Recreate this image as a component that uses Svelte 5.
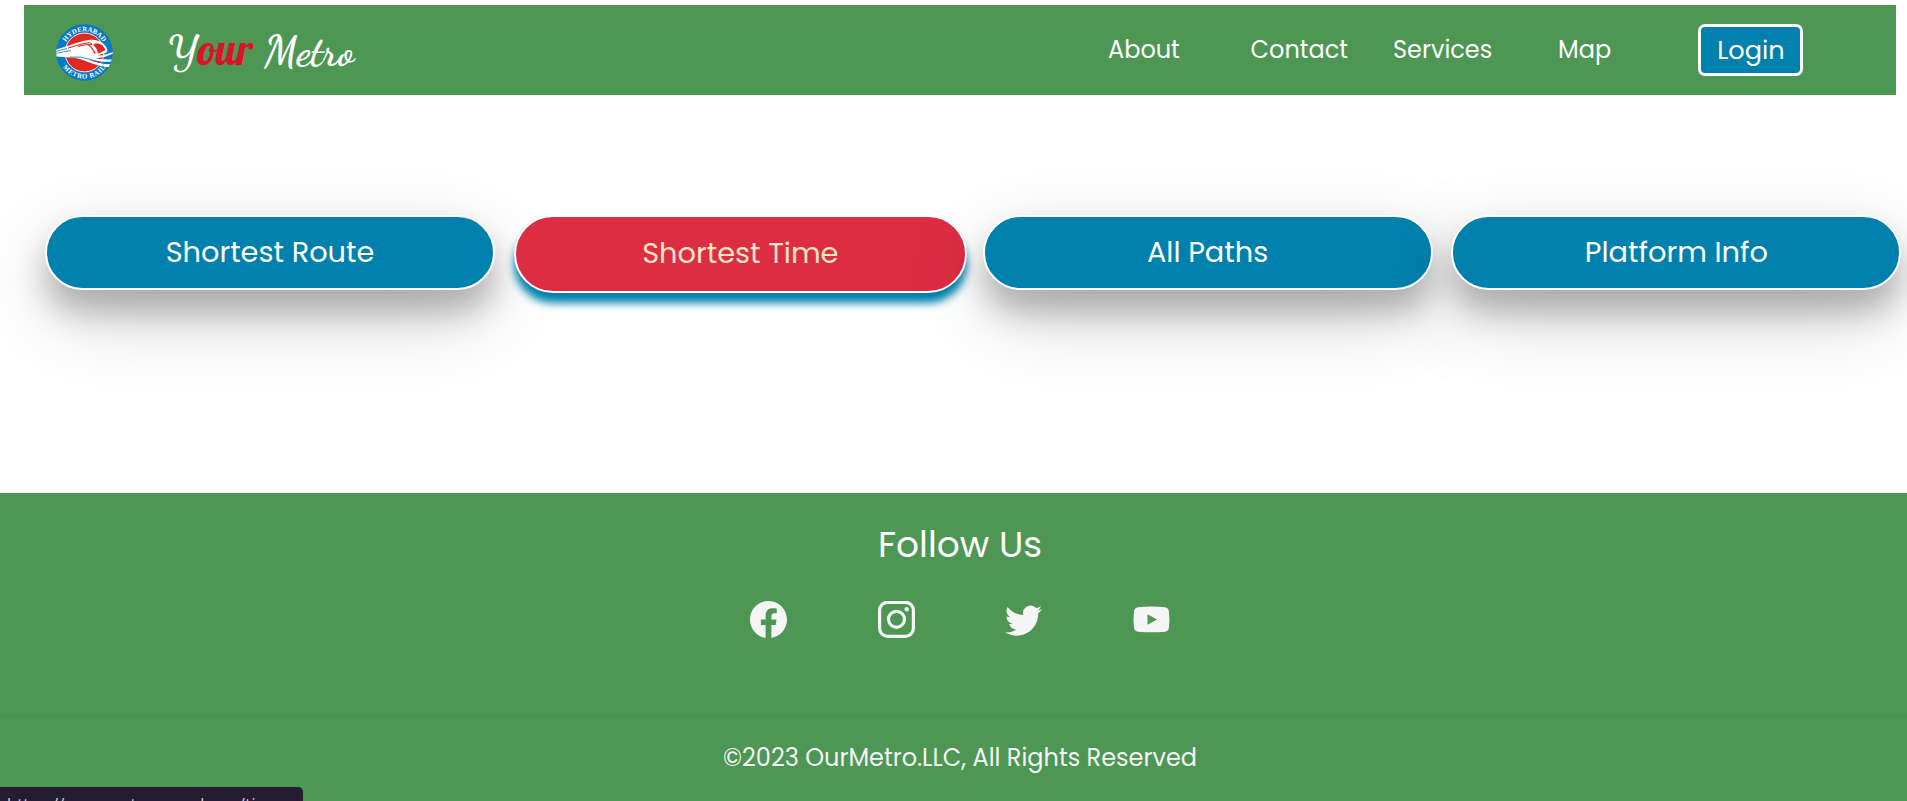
<script>
  const links = ['About', 'Contact', 'Services', 'Map'];
  const actions = ['Shortest Route', 'Shortest Time', 'All Paths', 'Platform Info'];
  let active = $state(1);
</script>

<div class="page">
  <header>
    <svg class="logo" viewBox="0 0 57 57">
      <defs>
        <path id="arc-top" d="M7.300 28.500a21.200 21.200 0 0 1 42.400 0" />
        <path id="arc-bottom" d="M2.500 28.500a26 26 0 0 0 52 0" />
        <clipPath id="disc"><circle cx="28.500" cy="28.500" r="28.300" /></clipPath>
      </defs>
      <circle cx="28.500" cy="28.500" r="28.300" fill="#0879c4" />
      <circle cx="28.500" cy="28.500" r="19.400" fill="#de2820" stroke="#fff" stroke-width=".9" />
      <g clip-path="url(#disc)">
        <path d="M0 25.500C14 22 24 16.500 35 15.800C43 15.500 49 19 51.500 26L50.500 28.500L41.500 31.500C48 31.500 53 29 57 28.200V29.800C51 32.500 45 34 39.500 34.400C46 35 51 35.500 56 35.500L55.500 37.600C48 38.500 40 36.800 32 35.500C40 38.800 48 40.500 54.500 40.300L53 43C40 43 31 36 18 33.800L0 32.500Z" fill="#fff" />
        <path d="M39.500 19.500C44 18.800 48 21.500 49.500 26L42 29.700Q41 24 37 20.800Z" fill="#de2820" />
        <path d="M12 24.200Q25 19.500 34 18.600L36 20.300Q28 20.300 22 22.500" fill="none" stroke="#de2820" stroke-width="1" />
        <path d="M32.500 21Q37 24 39 29.800" fill="none" stroke="#de2820" stroke-width="1.300" />
        <path d="M0 29.300L15 26.500M14 33Q25 32 35 35.700T54 38.900M0 27.300L11 24.500" fill="none" stroke="#0879c4" stroke-width=".8" />
      </g>
      <text class="ring"><textPath href="#arc-top" startOffset="50%" text-anchor="middle">HYDERABAD</textPath></text>
      <text class="ring wide"><textPath href="#arc-bottom" startOffset="50%" text-anchor="middle">METRO RAIL</textPath></text>
    </svg>
    <h1 class="brand">Y<span>our</span> Metro</h1>
    <nav>
      {#each links as link}
        <a class={link.toLowerCase()} href="#{link}">{link}</a>
      {/each}
    </nav>
    <button class="login">Login</button>
  </header>

  <main>
    {#each actions as action, i}
      <button class="action" class:active={active === i} onclick={() => (active = i)}>{action}</button>
    {/each}
  </main>

  <footer>
    <section class="follow">
      <h2>Follow Us</h2>
      <div class="social">
        <svg viewBox="0 0 16 16"><path d="M16 8.049c0-4.446-3.582-8.050-8-8.050C3.580 0-.002 3.603-.002 8.050c0 4.017 2.926 7.347 6.750 7.951v-5.625h-2.030V8.050H6.750V6.275c0-2.017 1.195-3.131 3.022-3.131.876 0 1.791.157 1.791.157v1.980h-1.009c-.993 0-1.303.621-1.303 1.258v1.510h2.218l-.354 2.326H9.250V16c3.824-.604 6.750-3.934 6.750-7.951z" /></svg>
        <svg viewBox="0 0 37 37"><g fill="none" stroke="#f5f5f5" stroke-width="3.200"><rect x="1.600" y="1.300" width="33.800" height="34" rx="8" /><circle cx="18.500" cy="18.300" r="8" /></g><circle cx="28.700" cy="8.300" r="2.200" /></svg>
        <svg viewBox="0 0 16 16"><path d="M5.026 15c6.038 0 9.341-5.003 9.341-9.334 0-.14 0-.282-.006-.422A6.685 6.685 0 0 0 16 3.542a6.658 6.658 0 0 1-1.889.518 3.301 3.301 0 0 0 1.447-1.817 6.533 6.533 0 0 1-2.087.793A3.286 3.286 0 0 0 7.875 6.030a9.325 9.325 0 0 1-6.767-3.429 3.289 3.289 0 0 0 1.018 4.382A3.323 3.323 0 0 1 .64 6.575v.045a3.288 3.288 0 0 0 2.632 3.218 3.203 3.203 0 0 1-.865.115 3.230 3.230 0 0 1-.614-.057 3.283 3.283 0 0 0 3.067 2.277A6.588 6.588 0 0 1 .78 13.580a6.320 6.320 0 0 1-.78-.045A9.344 9.344 0 0 0 5.026 15z" /></svg>
        <svg viewBox="0 0 37 37"><path fill-rule="evenodd" d="M5 6.300Q18.500 4.800 32 6.300Q35.500 6.700 35.900 10.500Q36.900 18.500 35.900 26.500Q35.500 30.200 32 30.700Q18.500 31.700 5 30.700Q1.500 30.200 1 26.500Q0 18.500 1 10.500Q1.500 6.700 5 6.300ZM14.500 13.300V23.700L24 18.500Z" /></svg>
      </div>
    </section>
    <p class="copy">©2023 OurMetro.LLC, All Rights Reserved</p>
  </footer>
  <div class="status">https://your-metro.vercel.app/time</div>
</div>

<style>
  :global(body) { margin: 0; background: #fff; }
  .page {
    position: relative;
    display: flex;
    flex-direction: column;
    width: 100%;
    height: 801px;
    overflow: hidden;
    font-family: Poppins, Inter, sans-serif;
    color: #fff;
  }
  header {
    display: flex;
    align-items: center;
    box-sizing: border-box;
    height: 90px;
    margin: 5px 11px 0 24px;
    padding: 0 93px 0 32px;
    background: #4d9654;
  }
  .logo { width: 57px; height: 57px; margin-top: 4px; flex: none; }
  .ring { font: bold 6.800px 'Liberation Serif', serif; fill: #fff; letter-spacing: .1px; }
  .wide { letter-spacing: .6px; }
  .brand {
    margin: 0 0 0 55px;
    font: 700 42px 'Dancing Script', 'Liberation Serif', serif;
    white-space: nowrap;
  }
  .brand span { color: #dc1228; font-weight: 400; font-family: Lobster, 'Liberation Serif', serif; }
  nav { display: flex; margin: 0 87px 0 auto; font-size: 24px; line-height: 36px; }
  a { color: #fff; text-decoration: none; white-space: nowrap; }
  .about { width: 142.500px; }
  .contact { width: 142.500px; }
  .services { width: 165px; }
  .map { width: 53px; }
  .login {
    box-sizing: border-box;
    width: 105px;
    height: 52px;
    padding: 0 0 0 1px;
    border: 3px solid #fff;
    border-radius: 7px;
    background: #0081ad;
    color: #fff;
    font: 400 25.600px Poppins, Inter, sans-serif;
  }
  main {
    display: grid;
    grid-template-columns: repeat(4, 450px);
    column-gap: 18.800px;
    align-items: start;
    height: 278px;
    padding: 120px 0 0 45px;
  }
  .action {
    box-sizing: border-box;
    position: relative;
    height: 75px;
    padding: 0;
    border: 2px solid #fff;
    border-radius: 40px;
    background: #0081ad;
    color: #fff;
    font: 400 28.800px Poppins, Inter, sans-serif;
    box-shadow: 0 27px 88px rgba(0, 0, 0, .16), 0 22px 32px rgba(0, 0, 0, .26);
  }
  .active {
    width: 453px;
    height: 78px;
    padding-bottom: 2px;
    background: #dc2d43;
    color: #ffe4c4;
    box-shadow: 0 10px 8px #0081ad;
  }
  footer { flex: 1; background: #4d9654; }
  .follow {
    box-sizing: border-box;
    height: 223px;
    padding-top: 25px;
    border-bottom: 1px solid #4a9151;
    text-align: center;
  }
  h2 { margin: 0 0 0 13px; font-size: 36px; font-weight: 400; line-height: 54px; }
  .social { display: flex; justify-content: center; gap: 90.800px; margin: 29px 0 0 13px; }
  .social svg { width: 37px; height: 37px; fill: #f5f5f5; }
  .copy { margin: 24px 0 0 13px; text-align: center; color: #f5f5f5; font-size: 24px; line-height: 36px; }
  .status {
    position: absolute;
    left: 0;
    bottom: 0;
    box-sizing: border-box;
    width: 303px;
    height: 14px;
    padding: 7px 7px 0;
    overflow: hidden;
    border-radius: 0 5px 0 0;
    background: #241c30;
    color: #d8d4de;
    font: 16px/20px 'Open Sans', sans-serif;
    letter-spacing: .4px;
    white-space: nowrap;
  }
</style>
